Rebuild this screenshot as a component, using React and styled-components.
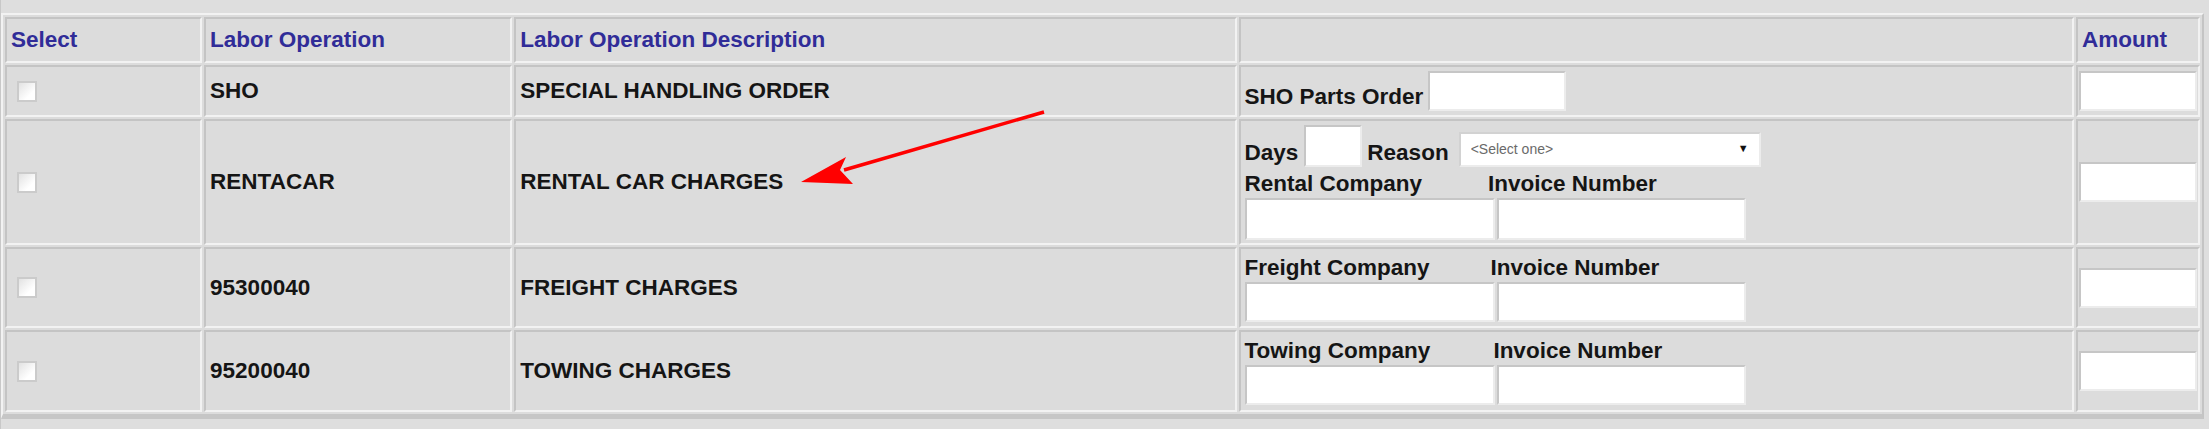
import React from "react";
import styled, { createGlobalStyle } from "styled-components";

const rows = [
  { code: "SHO", desc: "SPECIAL HANDLING ORDER", height: 52, kind: "sho" },
  { code: "RENTACAR", desc: "RENTAL CAR CHARGES", height: 126, kind: "rental" },
  { code: "95300040", desc: "FREIGHT CHARGES", height: 81, kind: "freight", company: "Freight Company" },
  { code: "95200040", desc: "TOWING CHARGES", height: 82, kind: "towing", company: "Towing Company" },
];

export default function App() {
  return (
    <>
      <GlobalStyle />
      <Page>
        <Grid>
          <colgroup>
            <col style={{ width: 197 }} />
            <col style={{ width: 308 }} />
            <col style={{ width: 722 }} />
            <col style={{ width: 835 }} />
            <col style={{ width: 124 }} />
          </colgroup>
          <thead>
            <Row $h={46}>
              <HeadCell>Select</HeadCell>
              <HeadCell>Labor Operation</HeadCell>
              <HeadCell>Labor Operation Description</HeadCell>
              <HeadCell></HeadCell>
              <HeadCell>Amount</HeadCell>
            </Row>
          </thead>
          <tbody>
            {rows.map((row) => (
              <Row key={row.code} $h={row.height}>
                <Cell>
                  <Check type="checkbox" />
                </Cell>
                <Cell>{row.code}</Cell>
                <Cell>{row.desc}</Cell>
                <Cell>
                  <Extras row={row} />
                </Cell>
                <Cell $tight>
                  <Field $w="100%" />
                </Cell>
              </Row>
            ))}
          </tbody>
        </Grid>

        <Arrow viewBox="0 0 2209 429">
          <line x1="1043" y1="112" x2="843" y2="170" stroke="#ff0000" strokeWidth="3.5" />
          <polygon points="800,182 845,157 839,170 852,184" fill="#ff0000" />
        </Arrow>
      </Page>
    </>
  );
}

function Extras({ row }) {
  if (row.kind === "sho") {
    return (
      <Line>
        <Label>SHO Parts Order</Label>
        <Field $w="138px" $gap={5} />
      </Line>
    );
  }

  if (row.kind === "rental") {
    return (
      <Stack>
        <Line>
          <Label>Days</Label>
          <Field $w="58px" $h={42} $gap={6} />
          <Label $gap={5}>Reason</Label>
          <SelectWrap>
            <Picker defaultValue="">
              <option value="">&lt;Select one&gt;</option>
            </Picker>
            <Caret>▼</Caret>
          </SelectWrap>
        </Line>
        <Line $top={3}>
          <Label>Rental Company</Label>
          <Label $gap={66}>Invoice Number</Label>
        </Line>
        <Pair>
          <Field $w="250px" $h={42} />
          <Field $w="249px" $h={42} />
        </Pair>
      </Stack>
    );
  }

  return (
    <Stack>
      <Line>
        <Label>{row.company}</Label>
        <Label $gap={row.kind === "towing" ? 63 : 61}>Invoice Number</Label>
      </Line>
      <Pair>
        <Field $w="250px" />
        <Field $w="249px" />
      </Pair>
    </Stack>
  );
}

const GlobalStyle = createGlobalStyle`
  body {
    margin: 0;
    background: #dedede;
    font-family: "Liberation Sans", Arial, sans-serif;
  }
`;

const Page = styled.div`
  position: relative;
  width: 2208px;
  height: 429px;
  padding-top: 13px;
  border-left: 1px solid #c8c8c8;
  overflow: hidden;
`;

const Grid = styled.table`
  table-layout: fixed;
  border-collapse: separate;
  border-spacing: 2px;
  width: 2203px;
  border-style: solid;
  border-width: 2px 2px 5px 2px;
  border-color: #f2f2f2 #c4c4c4 #c6c6c6 #f2f2f2;
  background: #dcdcdc;
`;

const Row = styled.tr`
  height: ${(p) => p.$h}px;
`;

const HeadCell = styled.th`
  border: 2px solid;
  border-color: #c4c4c4 #f2f2f2 #f2f2f2 #c4c4c4;
  padding: 2px 4px;
  text-align: left;
  vertical-align: middle;
  font-size: 22.5px;
  font-weight: bold;
  color: #302c98;
  white-space: nowrap;
`;

const Cell = styled.td`
  border: 2px solid;
  border-color: #c4c4c4 #f2f2f2 #f2f2f2 #c4c4c4;
  padding: ${(p) => (p.$tight ? "0 1px" : "2px 4px")};
  vertical-align: middle;
  font-size: 22.5px;
  font-weight: bold;
  color: #151515;
  white-space: nowrap;
`;

const Check = styled.input`
  appearance: none;
  display: block;
  box-sizing: border-box;
  width: 20px;
  height: 21px;
  margin: 0 0 0 6px;
  border: 2px solid #cbcbcb;
  background: linear-gradient(135deg, #e2e2e2, #ffffff 70%);
`;

const Stack = styled.div`
  display: flex;
  flex-direction: column;
`;

const Line = styled.div`
  display: flex;
  align-items: flex-end;
  margin-top: ${(p) => p.$top || 0}px;
`;

const Pair = styled.div`
  display: flex;
  gap: 2px;
`;

const Label = styled.span`
  line-height: 28px;
  font-size: 22.5px;
  font-weight: bold;
  color: #151515;
  margin-left: ${(p) => p.$gap || 0}px;
`;

const Field = styled.input`
  box-sizing: border-box;
  width: ${(p) => p.$w};
  height: ${(p) => p.$h || 40}px;
  margin: 0 0 0 ${(p) => p.$gap || 0}px;
  padding: 0 4px;
  border: 2px solid;
  border-color: #c6c6c6 #ececec #ececec #c6c6c6;
  background: #ffffff;
  font: 16px "Liberation Sans", Arial, sans-serif;
`;

const SelectWrap = styled.div`
  position: relative;
  margin-left: 10px;
  width: 302px;
  height: 35px;
`;

const Picker = styled.select`
  appearance: none;
  box-sizing: border-box;
  width: 100%;
  height: 100%;
  margin: 0;
  padding: 0 0 0 10px;
  border: 2px solid;
  border-color: #d2d2d2 #ececec #ececec #d2d2d2;
  border-radius: 0;
  background: #ffffff;
  font: 14px "Liberation Sans", Arial, sans-serif;
  color: #6a6a6a;
`;

const Caret = styled.span`
  position: absolute;
  right: 12px;
  top: 10px;
  font-size: 11px;
  line-height: 12px;
  color: #111;
  pointer-events: none;
`;

const Arrow = styled.svg`
  position: absolute;
  left: 0;
  top: 0;
  width: 2209px;
  height: 429px;
  pointer-events: none;
`;
